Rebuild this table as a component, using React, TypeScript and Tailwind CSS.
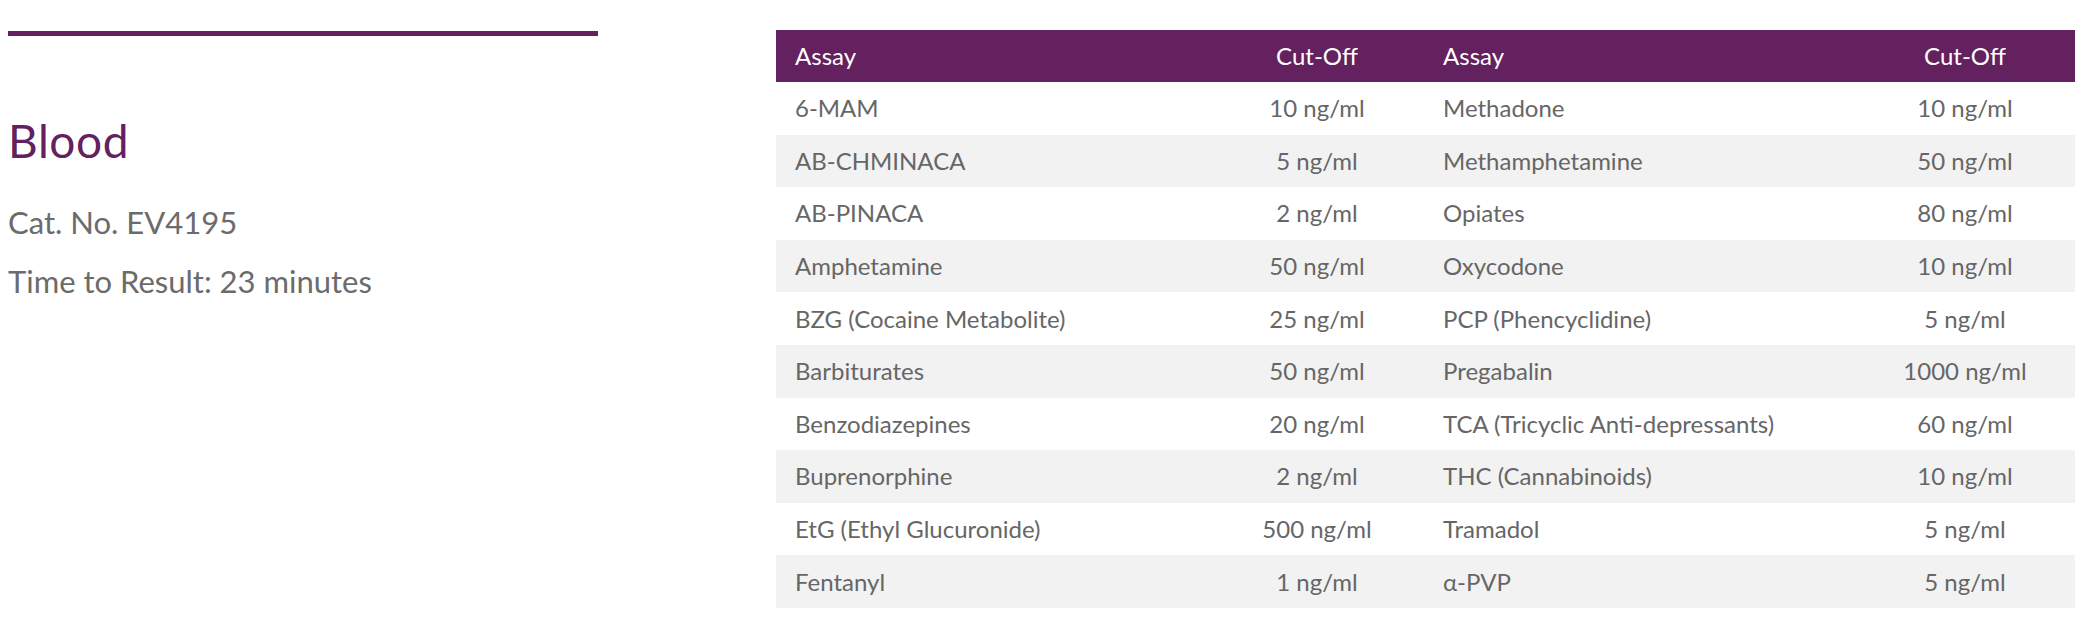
import React from "react";

const rows: [string, string, string, string][] = [
  ["6-MAM", "10 ng/ml", "Methadone", "10 ng/ml"],
  ["AB-CHMINACA", "5 ng/ml", "Methamphetamine", "50 ng/ml"],
  ["AB-PINACA", "2 ng/ml", "Opiates", "80 ng/ml"],
  ["Amphetamine", "50 ng/ml", "Oxycodone", "10 ng/ml"],
  ["BZG (Cocaine Metabolite)", "25 ng/ml", "PCP (Phencyclidine)", "5 ng/ml"],
  ["Barbiturates", "50 ng/ml", "Pregabalin", "1000 ng/ml"],
  ["Benzodiazepines", "20 ng/ml", "TCA (Tricyclic Anti-depressants)", "60 ng/ml"],
  ["Buprenorphine", "2 ng/ml", "THC (Cannabinoids)", "10 ng/ml"],
  ["EtG (Ethyl Glucuronide)", "500 ng/ml", "Tramadol", "5 ng/ml"],
  ["Fentanyl", "1 ng/ml", "α-PVP", "5 ng/ml"],
];

export default function App() {
  return (
    <div className="flex w-[2084px] h-[641px] bg-white pt-[30px] pl-2 font-['Lato',sans-serif]">
      <div className="w-[590px] shrink-0 flex flex-col">
        <div className="mt-px h-[5px] bg-[#63215f]" />
        <div className="mt-[77px] text-[46px] leading-[55px] tracking-[0.6px] text-[#63215f]">Blood</div>
        <div className="mt-[25px] text-[31px] leading-[59px] text-[#6b6b6b]">Cat. No. EV4195</div>
        <div className="text-[31px] leading-[59px] text-[#6b6b6b]">Time to Result: 23 minutes</div>
      </div>
      <div className="ml-[178px] w-[1299px] shrink-0 text-[24px]">
        <div className="grid grid-cols-[434px_214px_431px_220px] h-[52px] items-center bg-[#63215f] text-white">
          <div className="pl-[19px]">Assay</div>
          <div className="text-center">Cut-Off</div>
          <div className="pl-[19px]">Assay</div>
          <div className="text-center">Cut-Off</div>
        </div>
        {rows.map((r, i) => (
          <div
            key={i}
            className={
              "grid grid-cols-[434px_214px_431px_220px] h-[52.6px] items-center text-[#666666] " +
              (i % 2 === 1 ? "bg-[#f2f2f2]" : "bg-white")
            }
          >
            <div className="pl-[19px]">{r[0]}</div>
            <div className="text-center">{r[1]}</div>
            <div className="pl-[19px]">{r[2]}</div>
            <div className="text-center">{r[3]}</div>
          </div>
        ))}
      </div>
    </div>
  );
}
